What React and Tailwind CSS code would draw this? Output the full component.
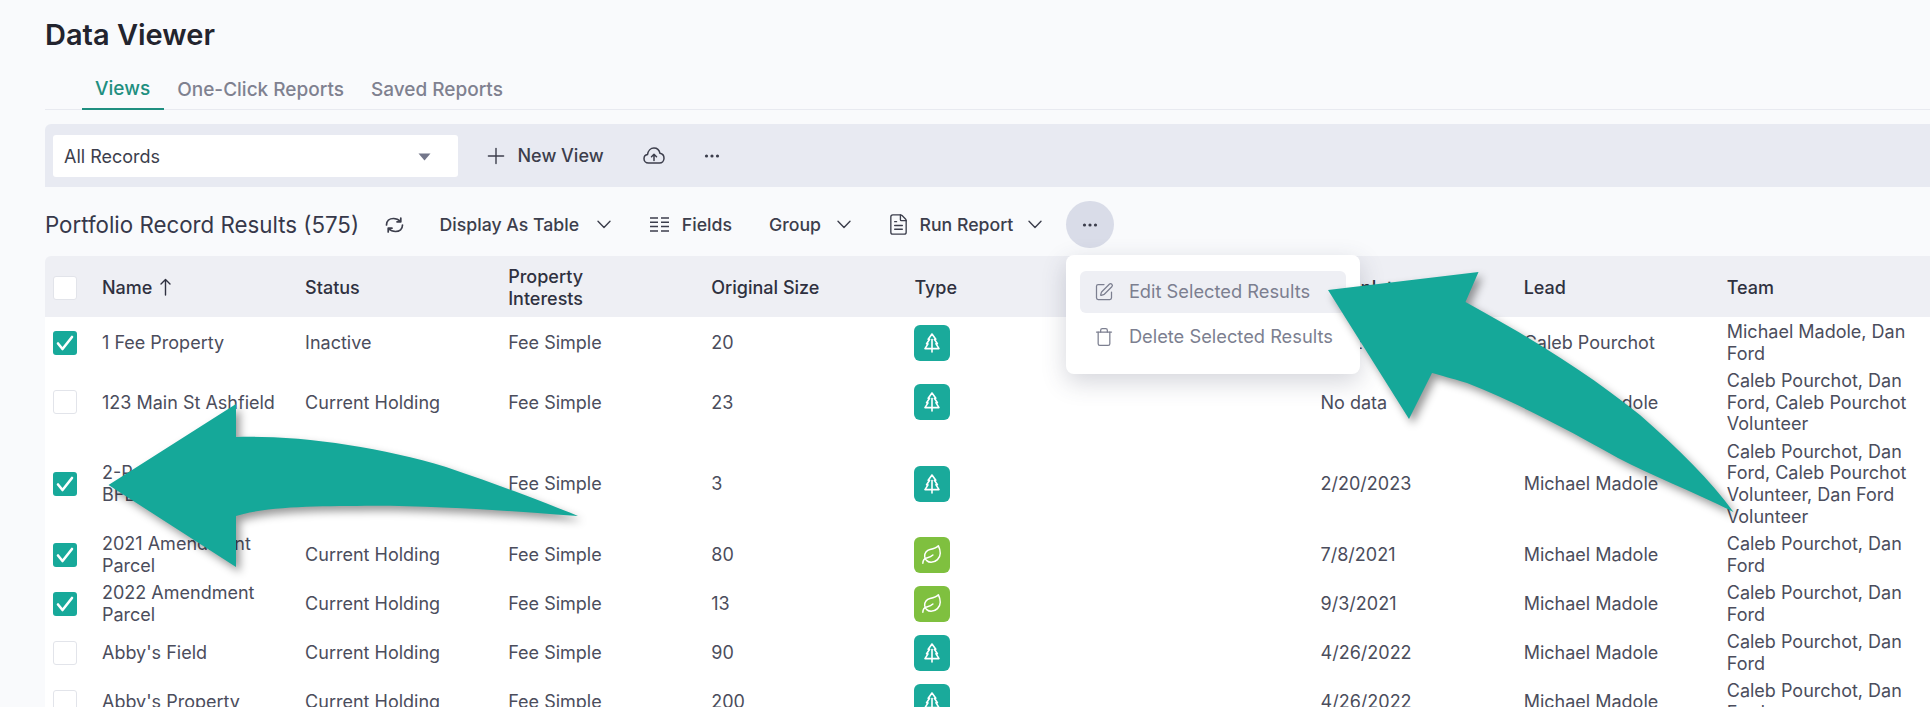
import React from "react";
import { FileText, Leaf, Plus, SquarePen, Trash } from "lucide-react";

const rows = [
  { name: "1 Fee Property", status: "Inactive", size: "20", kind: "tree", checked: true, date: "6/1/2021", lead: "Caleb Pourchot", team: "Michael Madole, Dan Ford" },
  { name: "123 Main St Ashfield", status: "Current Holding", size: "23", kind: "tree", checked: false, date: "No data", lead: "Michael Madole", team: "Caleb Pourchot, Dan Ford, Caleb Pourchot Volunteer" },
  { name: "2-Parcel Property BFLT", status: "Current Holding", size: "3", kind: "tree", checked: true, date: "2/20/2023", lead: "Michael Madole", team: "Caleb Pourchot, Dan Ford, Caleb Pourchot Volunteer, Dan Ford Volunteer" },
  { name: "2021 Amendment Parcel", status: "Current Holding", size: "80", kind: "leaf", checked: true, date: "7/8/2021", lead: "Michael Madole", team: "Caleb Pourchot, Dan Ford" },
  { name: "2022 Amendment Parcel", status: "Current Holding", size: "13", kind: "leaf", checked: true, date: "9/3/2021", lead: "Michael Madole", team: "Caleb Pourchot, Dan Ford" },
  { name: "Abby's Field", status: "Current Holding", size: "90", kind: "tree", checked: false, date: "4/26/2022", lead: "Michael Madole", team: "Caleb Pourchot, Dan Ford" },
  { name: "Abby's Property", status: "Current Holding", size: "200", kind: "tree", checked: false, date: "4/26/2022", lead: "Michael Madole", team: "Caleb Pourchot, Dan Ford" },
];

const gridCols = "grid grid-cols-[57px_repeat(9,203.1px)] items-center";

const Dots = () => (
  <svg width="16" height="4" viewBox="0 0 16 4" fill="currentColor">
    <circle cx="2.5" cy="2" r="1.6" />
    <circle cx="8" cy="2" r="1.6" />
    <circle cx="13.5" cy="2" r="1.6" />
  </svg>
);

const Chevron = () => (
  <svg width="14" height="9" viewBox="0 0 14 9" fill="none" stroke="currentColor" strokeWidth="1.4" strokeLinecap="round" strokeLinejoin="round">
    <path d="M1 1.2 7 7.4l6-6.2" />
  </svg>
);

const CloudIcon = () => (
  <svg width="22" height="17" viewBox="0 0 22 17" fill="none" stroke="currentColor" strokeWidth="1.5" strokeLinecap="round" strokeLinejoin="round">
    <path d="M5.5 16C2.8 16 1 14 1 11.7 1 9.5 2.6 7.9 4.5 7.6 5 4 7.5 1 11 1c3.2 0 5.3 2.2 6 5.3 2.5.5 4 2.5 4 4.9 0 2.7-2 4.8-4.5 4.8z" />
    <path d="M11 13.5V7.5M8.5 9.8 11 7.3l2.5 2.5" />
  </svg>
);

const RepeatIcon = () => (
  <svg width="19" height="16" viewBox="0 0 19 16" fill="none" stroke="currentColor" strokeWidth="1.7" strokeLinecap="round" strokeLinejoin="round">
    <path d="M1.5 8C1.5 4 4.5 1.5 8.5 1.5c3 0 5 1 7 3M15.8 1v3.8H12" />
    <path d="M17.5 8c0 4-3 6.5-7 6.5-3 0-5-1-7-3M3.2 15v-3.8H7" />
  </svg>
);

const FieldsIcon = () => (
  <svg width="19" height="15" viewBox="0 0 19 15" fill="none" stroke="currentColor" strokeWidth="1.5">
    <path d="M0 1h8M0 5.3h8M0 9.6h8M0 14h8M11 1h8M11 5.3h8M11 9.6h8M11 14h8" />
  </svg>
);

const TreeIcon = () => (
  <svg width="16" height="20" viewBox="0 0 16 20" fill="none" stroke="currentColor" strokeWidth="1.6" strokeLinejoin="round" strokeLinecap="round">
    <path d="M8 1 4.2 6.3h1.4L2.6 10.8H4L1 15.6h14l-3-4.8h1.4l-3-4.5h1.4z" />
    <path d="M8 6.5V19" />
  </svg>
);

const SortArrow = () => (
  <svg width="11" height="18" viewBox="0 0 11 18" fill="none" stroke="currentColor" strokeWidth="1.4" strokeLinecap="round" strokeLinejoin="round">
    <path d="M5.5 17V1.5M1 6l4.5-4.5L10 6" />
  </svg>
);

const Checkbox = ({ checked }) =>
  checked ? (
    <div className="w-6 h-6 rounded-[3px] bg-[#17a99a]">
      <svg width="24" height="24" viewBox="0 0 24 24" fill="none" stroke="white" strokeWidth="2.6" strokeLinecap="round" strokeLinejoin="round">
        <path d="M5 12.5 9.5 18 19 6" />
      </svg>
    </div>
  ) : (
    <div className="w-6 h-6 rounded-[3px] bg-white border border-[#e2e4ea]" />
  );

const TypeBadge = ({ kind }) => (
  <div className={`w-9 h-9 rounded-md flex items-center justify-center text-white ${kind === "leaf" ? "bg-[#7fc03f]" : "bg-[#1aaa9b]"}`}>
    {kind === "leaf" ? <Leaf size={22} strokeWidth={1.6} /> : <TreeIcon />}
  </div>
);

const App = () => {
  return (
    <div className="relative h-screen overflow-hidden bg-[#f9fafc] pl-[45px] font-['Inter',sans-serif] text-[18px] leading-[21.7px] text-[#4b4d5c]">
      <div className="h-[66px] pt-1 flex items-center text-[29px] font-semibold text-[#23242e]">Data Viewer</div>

      <div className="h-11 flex items-center pl-[36.6px] border-b border-[#e8eaf0] text-[19px] text-[#7f8190] font-medium">
        <div className="h-11 px-[13.5px] pt-1 flex items-center text-[#1f8f80] border-b-2 border-[#1f8f80]">Views</div>
        <div className="h-11 px-[13.5px] pt-1 flex items-center">One-Click Reports</div>
        <div className="h-11 px-[13.5px] pt-1 flex items-center">Saved Reports</div>
      </div>

      <div className="mt-[14px] h-[63px] flex items-center pl-2 bg-[#e8eaf2] rounded-tl-md text-[#3c3e4c]">
        <div className="w-[405px] h-[42px] pt-[2px] bg-white rounded-[3px] flex items-center justify-between pl-[11px] pr-[27px]">
          <span>All Records</span>
          <svg width="13" height="8" viewBox="0 0 13 8" fill="#73768a">
            <path d="M0.5 0.5h12L6.5 7.5z" />
          </svg>
        </div>
        <Plus size={26} strokeWidth={1.3} className="ml-[24.5px]" />
        <span className="ml-[9px] font-medium">New View</span>
        <span className="ml-[39px]"><CloudIcon /></span>
        <span className="ml-[39px]"><Dots /></span>
      </div>

      <div className="mt-[14px] mb-2 h-[47px] flex items-center text-[17.7px] text-[#3c3e4c] font-medium">
        <span className="text-[22.3px] font-normal text-[#36384a]">Portfolio Record Results (575)</span>
        <span className="ml-[25.5px]"><RepeatIcon /></span>
        <span className="ml-[36px]">Display As Table</span>
        <span className="ml-[17.7px]"><Chevron /></span>
        <span className="ml-[39px]"><FieldsIcon /></span>
        <span className="ml-[13px]">Fields</span>
        <span className="ml-[37px]">Group</span>
        <span className="ml-[16px]"><Chevron /></span>
        <FileText size={23} strokeWidth={1.4} className="ml-[36px]" />
        <span className="ml-[9.5px]">Run Report</span>
        <span className="ml-[15px]"><Chevron /></span>
        <div className="relative ml-[23.5px] w-12 h-[47px] rounded-full bg-[#d9dce8] flex items-center justify-center">
          <Dots />
          <div className="absolute z-10 left-0 top-[54px] w-[294px] h-[119px] bg-white rounded-lg shadow-[0_8px_24px_rgba(60,64,90,0.22)] px-[14px] pt-4 text-[18.3px] text-[#7c7f90] font-normal">
            <div className="h-[42px] rounded-md bg-[#eeeff4] flex items-center pl-[14px]">
              <SquarePen size={20} strokeWidth={1.5} />
              <span className="ml-[15px]">Edit Selected Results</span>
            </div>
            <div className="h-[48px] flex items-center pl-[14px]">
              <Trash size={20} strokeWidth={1.5} />
              <span className="ml-[15px]">Delete Selected Results</span>
            </div>
          </div>
        </div>
      </div>

      <div className={`${gridCols} h-[61px] pt-[2px] bg-[#eeeff4] rounded-tl-md font-medium text-[#2f3140]`}>
        <div className="pl-2"><Checkbox checked={false} /></div>
        <div className="flex items-center gap-2">Name <SortArrow /></div>
        <div>Status</div>
        <div>Property<br />Interests</div>
        <div>Original Size</div>
        <div>Type</div>
        <div />
        <div>Completed</div>
        <div>Lead</div>
        <div>Team</div>
      </div>

      <div className="bg-white pt-[1px]">
        {rows.map((row) => (
          <div key={row.name} className={`${gridCols} py-[2.8px]`}>
            <div className="pl-2"><Checkbox checked={row.checked} /></div>
            <div className="pr-4">{row.name}</div>
            <div className="pr-4">{row.status}</div>
            <div>Fee Simple</div>
            <div>{row.size}</div>
            <div><TypeBadge kind={row.kind} /></div>
            <div />
            <div>{row.date}</div>
            <div>{row.lead}</div>
            <div className="pr-[10px]">{row.team}</div>
          </div>
        ))}
      </div>

      <svg className="absolute inset-0 z-20 w-full h-full pointer-events-none drop-shadow-[4px_5px_4px_rgba(0,0,0,0.4)]" viewBox="0 0 1930 707" fill="#15a899">
        <path d="M108.5 485 236 404V437C300 435 380 447 446 467 490 482 540 500 578 516 500 510 420 505 357 506 310 506 265 507 236 516V567Z" />
        <path d="M1328 290 1478.5 272 1465.5 302C1535 340 1590 375 1640 415 1680 450 1710 480 1733.5 512 1690 490 1650 475 1618 458 1560 425 1510 400 1467 383 1450 378 1440 375 1432 373L1409 419Z" />
      </svg>
    </div>
  );
};

export default App;
